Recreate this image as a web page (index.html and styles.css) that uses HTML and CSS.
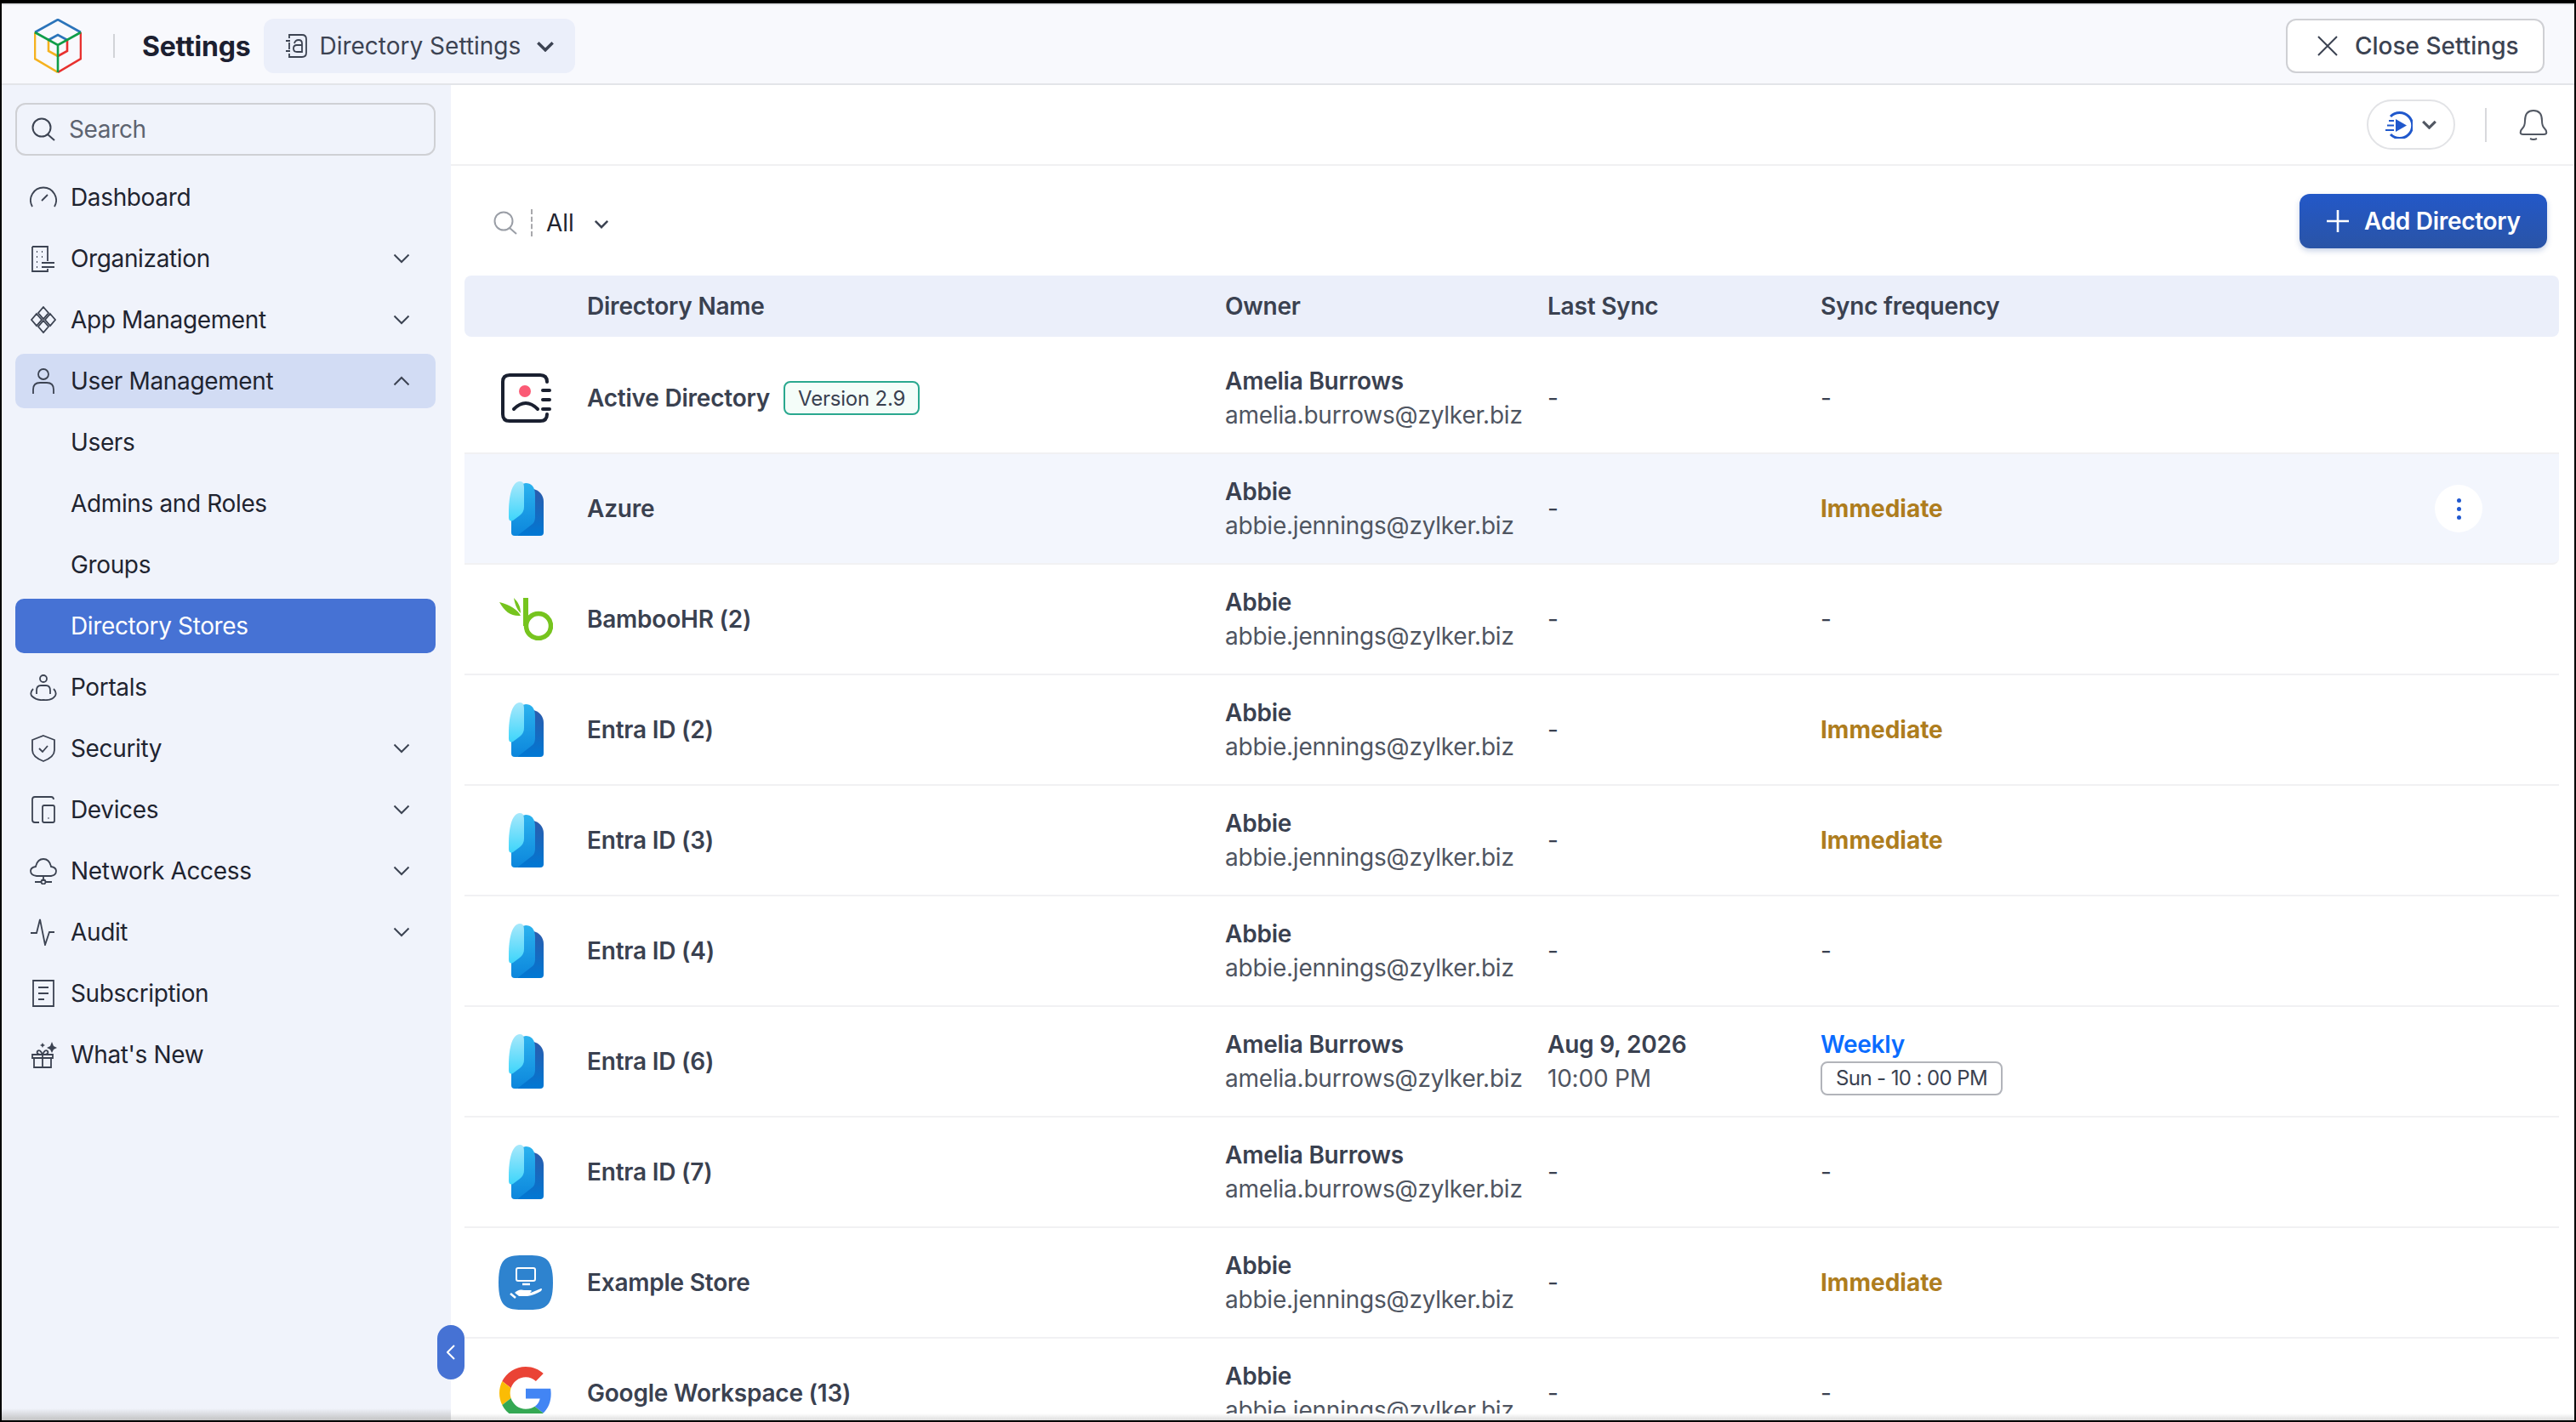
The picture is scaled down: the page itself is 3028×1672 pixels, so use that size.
FILE: index.html
```html
<!DOCTYPE html>
<html lang="en">
<head>
<meta charset="UTF-8">
<meta name="viewport" content="width=device-width, initial-scale=1.0">
<title>Directory Stores - Settings</title>
<link rel="stylesheet" href="styles.css">
</head>
<body>

<svg class="defs" width="0" height="0">
  <defs>
    <linearGradient id="azBack" x1="0" y1="0" x2="0" y2="1">
      <stop offset="0" stop-color="#2d5bab"/>
      <stop offset="1" stop-color="#0078d4"/>
    </linearGradient>
    <linearGradient id="azMid" x1="0" y1="0" x2="0" y2="1">
      <stop offset="0" stop-color="#2bb2ee"/>
      <stop offset="1" stop-color="#0c86dc"/>
    </linearGradient>
    <linearGradient id="azFront" x1="0" y1="0" x2="0" y2="1">
      <stop offset="0" stop-color="#a8e8fb"/>
      <stop offset="1" stop-color="#3dd5fb"/>
    </linearGradient>
    <symbol id="azure" viewBox="0 0 41 64">
      <path fill="url(#azBack)" d="M26 8C36 10 41 16 41 24V60Q41 64 37 64H10Z"/>
      <path fill="url(#azMid)" d="M3 42V60Q3 64 7 64H10L28 50Q31 47 31 42V16C31 6 26 2 20 2L12 4Z"/>
      <path fill="url(#azFront)" d="M0 36C0 20 3 0 13 0C18 0 18 5 18 10V30Q18 36 13 40L5 46Q0 48 0 42Z"/>
    </symbol>
    <symbol id="chev" viewBox="0 0 20 12">
      <path d="M1.5 1.5L10 10L18.500 1.500" fill="none" stroke="currentColor" stroke-width="2"/>
    </symbol>
  </defs>
</svg>

<div class="frame">
  <header class="header">
    <svg class="logo" viewBox="0 0 56 64" fill="none" stroke-width="2.6">
      <path stroke="#f5b21f" d="M1 16V47L28 63M17 25V38L28 44"/>
      <path stroke="#e8312f" d="M55 16V47L28 63M39 25V38L28 44"/>
      <path stroke="#2b74ba" d="M1 16L28 1L55 16M17 25L28 19L39 25"/>
      <path stroke="#0f9d48" d="M1 16L28 31L55 16M28 31V63"/>
    </svg>
    <span class="header-sep"></span>
    <span class="header-title">Settings</span>
    <div class="crumb">
      <svg class="crumb-icon" viewBox="0 0 26 28" fill="none" stroke="#3c4352" stroke-width="1.800">
        <path d="M5 5V1H20Q25 1 25 6V22Q25 27 20 27H5V23M5 10V18M1 8H6M1 20H6"/>
        <path d="M11 11Q12 7 16 7Q20 7 20 11V21H14Q10 21 10 17T14 13H20"/>
      </svg>
      <span>Directory Settings</span>
      <svg class="chev-bold" viewBox="0 0 20 12"><path d="M2 2L10 10L18 2" fill="none" stroke="#3c4352" stroke-width="3.200"/></svg>
    </div>
    <button class="close-btn">
      <svg class="close-icon" viewBox="0 0 24 24"><path d="M1 1L23 23M23 1L1 23" stroke="#3c4352" stroke-width="2"/></svg>
      Close Settings
    </button>
  </header>

  <div class="body-row">
    <aside class="sidebar">
      <div class="search">
        <svg class="search-icon" viewBox="0 0 28 28" fill="none" stroke="#3c4352" stroke-width="2">
          <circle cx="12" cy="12" r="10.500"/><path d="M19 20L27 27"/>
        </svg>
        <span>Search</span>
      </div>
      <nav class="nav">
        <a class="nav-item">
          <svg class="nav-icon" viewBox="0 0 32 32"><path d="M3 27A15 15 0 1 1 29 27M14 20L21 13"/></svg>
          Dashboard
        </a>
        <a class="nav-item">
          <svg class="nav-icon" viewBox="0 0 32 32"><path d="M3 2H21V19M21 28V31H3V2M8 8H9M14 8H15M8 14H9M14 14H15M8 20H9M8 26H9M14 21H29M14 26H29"/></svg>
          Organization
          <svg class="chev"><use href="#chev"/></svg>
        </a>
        <a class="nav-item">
          <svg class="nav-icon" viewBox="0 0 32 32"><path d="M16 1L22 8L16 15L10 8ZM8 9L14 16L8 23L2 16ZM24 9L30 16L24 23L18 16ZM16 17L22 24L16 31L10 24Z"/></svg>
          App Management
          <svg class="chev"><use href="#chev"/></svg>
        </a>
        <a class="nav-item open">
          <svg class="nav-icon" viewBox="0 0 32 32"><circle cx="16" cy="8" r="6"/><path d="M4 31V26Q4 18 12 18H20Q28 18 28 26V31"/></svg>
          User Management
          <svg class="chev up"><use href="#chev"/></svg>
        </a>
        <a class="nav-item sub">Users</a>
        <a class="nav-item sub">Admins and Roles</a>
        <a class="nav-item sub">Groups</a>
        <a class="nav-item sub active">Directory Stores</a>
        <a class="nav-item">
          <svg class="nav-icon" viewBox="0 0 32 32"><circle cx="16" cy="6" r="4"/><path d="M8 24V20Q8 14 13 14H19Q24 14 24 20V24M4 18Q0 22 2 26Q8 32 16 31Q26 32 30 26Q32 22 28 18"/></svg>
          Portals
        </a>
        <a class="nav-item">
          <svg class="nav-icon" viewBox="0 0 32 32"><path d="M16 1L29 6V18Q29 26 16 31Q3 26 3 18V6ZM11 16L15 20L21 13"/></svg>
          Security
          <svg class="chev"><use href="#chev"/></svg>
        </a>
        <a class="nav-item">
          <svg class="nav-icon" viewBox="0 0 32 32"><path d="M11 31H6Q3 31 3 28V4Q3 1 6 1H25Q28 1 28 4M17 11H27Q29 11 29 13V29Q29 31 27 31H17Q15 31 15 29V13Q15 11 17 11ZM21.500 26H22.500"/></svg>
          Devices
          <svg class="chev"><use href="#chev"/></svg>
        </a>
        <a class="nav-item">
          <svg class="nav-icon" viewBox="0 0 32 32"><path d="M8 22H25Q31 21 31 16Q31 12 25 11Q23 2 16 2Q9 2 7 11Q1 12 1 16Q1 21 8 22ZM16 22V28M6 29H13M19 29H26"/><circle cx="16" cy="29" r="2.500"/></svg>
          Network Access
          <svg class="chev"><use href="#chev"/></svg>
        </a>
        <a class="nav-item">
          <svg class="nav-icon" viewBox="0 0 32 32"><path d="M1 17H8L12 1L18 31L23 16H29"/></svg>
          Audit
          <svg class="chev"><use href="#chev"/></svg>
        </a>
        <a class="nav-item">
          <svg class="nav-icon" viewBox="0 0 32 32"><path d="M4 1H28V31H4ZM10 9H22M10 16H22M10 23H17"/></svg>
          Subscription
        </a>
        <a class="nav-item">
          <svg class="nav-icon" viewBox="0 0 32 32"><path d="M3 16H27V20H3ZM5 20H25V31H5ZM15 16V31M15 16Q7 16 9 12Q12 9 15 16Q18 9 21 12Q23 16 15 16Z"/><path class="fill" d="M26 1L28 6L32 8L28 10L26 14L24 10L20 8L24 6ZM15 2L16 4L18 5L16 6L15 8L14 6L12 5L14 4Z"/></svg>
          What's New
        </a>
      </nav>
      <span class="collapse">
        <svg class="collapse-icon" viewBox="0 0 10 18"><path d="M9 1L1 9L9 17" fill="none" stroke="#fff" stroke-width="2"/></svg>
      </span>
    </aside>

    <main class="main">
      <div class="topbar">
        <div class="guide-pill">
          <svg class="guide-icon" viewBox="0 0 32 32" fill="none" stroke="#2058cc" stroke-width="3">
            <path d="M6 6A15 15 0 1 1 6 27"/>
            <path d="M12 9L25 16.500L12 24Z" fill="#2058cc" stroke="none"/>
            <path d="M4 11H10M2 16.500H10M0 22H10" stroke-width="2"/>
          </svg>
          <svg class="chev-bold small" viewBox="0 0 20 12"><path d="M2 2L10 10L18 2" fill="none" stroke="#525863" stroke-width="3.400"/></svg>
        </div>
        <span class="topbar-sep"></span>
        <svg class="bell" viewBox="0 0 34 38" fill="none" stroke="#525863" stroke-width="2">
          <path d="M2 29Q1 26 4 23Q7 20 7 14Q7 2 17 2T27 14Q27 20 30 23Q33 26 32 29Q31 30 29 30H5Q3 30 2 29ZM13 35Q17 37 21 35"/>
        </svg>
      </div>

      <div class="filter-row">
        <div class="filter">
          <svg class="filter-search" viewBox="0 0 28 28" fill="none" stroke="#9a9ea6" stroke-width="2">
            <circle cx="12" cy="12" r="10.500"/><path d="M19 20L27 27"/>
          </svg>
          <span class="filter-sep"></span>
          <span class="filter-label">All</span>
          <svg class="chev-bold filter-chev" viewBox="0 0 20 12"><path d="M2 2L10 10L18 2" fill="none" stroke="#3c4352" stroke-width="2.800"/></svg>
        </div>
        <button class="add-btn">
          <svg class="add-icon" viewBox="0 0 26 26"><path d="M13 0V26M0 13H26" stroke="#fff" stroke-width="2.600"/></svg>
          Add Directory
        </button>
      </div>

      <div class="table">
        <div class="table-head">
          <span></span>
          <span>Directory Name</span>
          <span>Owner</span>
          <span>Last Sync</span>
          <span>Sync frequency</span>
        </div>

        <div class="table-row">
          <div class="cell-icon">
            <svg class="ic-ad" viewBox="0 0 60 58" fill="none" stroke="#1a2030" stroke-width="4" stroke-linecap="round">
              <path d="M55 10Q55 2 47 2H11Q3 2 3 10V48Q3 56 11 56H47Q55 56 55 48"/>
              <path d="M50 20H58M50 31H58M50 42H58M16 42Q30 28 44 42"/>
              <circle cx="29" cy="21" r="7" fill="#fb5a75" stroke="none"/>
            </svg>
          </div>
          <div class="cell-name">Active Directory <span class="tag">Version 2.9</span></div>
          <div class="owner"><b>Amelia Burrows</b><span>amelia.burrows@zylker.biz</span></div>
          <div class="cell">-</div>
          <div class="cell">-</div>
        </div>

        <div class="table-row hover">
          <div class="cell-icon"><svg class="ic-azure"><use href="#azure"/></svg></div>
          <div class="cell-name">Azure</div>
          <div class="owner"><b>Abbie</b><span>abbie.jennings@zylker.biz</span></div>
          <div class="cell">-</div>
          <div class="cell freq-now">Immediate</div>
          <div class="kebab"><i></i><i></i><i></i></div>
        </div>

        <div class="table-row">
          <div class="cell-icon">
            <svg class="ic-bamboo" viewBox="0 0 63 50">
              <path d="M31 0V33" stroke="#76c41e" stroke-width="6" fill="none"/>
              <circle cx="46" cy="33" r="14.500" stroke="#76c41e" stroke-width="5.500" fill="none"/>
              <path fill="#76c41e" d="M0 5C12 8 22 14 25 21C14 22 6 16 0 5ZM17 0C22 5 25 10 25 18C20 13 18 6 17 0Z"/>
            </svg>
          </div>
          <div class="cell-name">BambooHR (2)</div>
          <div class="owner"><b>Abbie</b><span>abbie.jennings@zylker.biz</span></div>
          <div class="cell">-</div>
          <div class="cell">-</div>
        </div>

        <div class="table-row">
          <div class="cell-icon"><svg class="ic-azure"><use href="#azure"/></svg></div>
          <div class="cell-name">Entra ID (2)</div>
          <div class="owner"><b>Abbie</b><span>abbie.jennings@zylker.biz</span></div>
          <div class="cell">-</div>
          <div class="cell freq-now">Immediate</div>
        </div>

        <div class="table-row">
          <div class="cell-icon"><svg class="ic-azure"><use href="#azure"/></svg></div>
          <div class="cell-name">Entra ID (3)</div>
          <div class="owner"><b>Abbie</b><span>abbie.jennings@zylker.biz</span></div>
          <div class="cell">-</div>
          <div class="cell freq-now">Immediate</div>
        </div>

        <div class="table-row">
          <div class="cell-icon"><svg class="ic-azure"><use href="#azure"/></svg></div>
          <div class="cell-name">Entra ID (4)</div>
          <div class="owner"><b>Abbie</b><span>abbie.jennings@zylker.biz</span></div>
          <div class="cell">-</div>
          <div class="cell">-</div>
        </div>

        <div class="table-row">
          <div class="cell-icon"><svg class="ic-azure"><use href="#azure"/></svg></div>
          <div class="cell-name">Entra ID (6)</div>
          <div class="owner"><b>Amelia Burrows</b><span>amelia.burrows@zylker.biz</span></div>
          <div class="owner sync"><b>Aug 9, 2026</b><span>10:00 PM</span></div>
          <div class="freq-weekly">
            <b>Weekly</b>
            <span class="slot">Sun - 10 : 00 PM</span>
          </div>
        </div>

        <div class="table-row">
          <div class="cell-icon"><svg class="ic-azure"><use href="#azure"/></svg></div>
          <div class="cell-name">Entra ID (7)</div>
          <div class="owner"><b>Amelia Burrows</b><span>amelia.burrows@zylker.biz</span></div>
          <div class="cell">-</div>
          <div class="cell">-</div>
        </div>

        <div class="table-row">
          <div class="cell-icon">
            <svg class="ic-store" viewBox="0 0 64 64">
              <path fill="#2e83cf" d="M32 0C52 0 64 0 64 32S52 64 32 64S0 64 0 32S12 0 32 0Z"/>
              <rect x="21" y="15" width="22" height="15" rx="2" fill="none" stroke="#fff" stroke-width="2"/>
              <path d="M28 34H37" stroke="#fff" stroke-width="2.500"/>
              <path fill="#fff" d="M19 44Q24 39 30 41H38Q40 42 37 44H31H38L50 39Q52 39 50 42Q42 47 34 48H24Z"/>
              <path d="M14 45L20 50" stroke="#fff" stroke-width="2.500"/>
            </svg>
          </div>
          <div class="cell-name">Example Store</div>
          <div class="owner"><b>Abbie</b><span>abbie.jennings@zylker.biz</span></div>
          <div class="cell">-</div>
          <div class="cell freq-now">Immediate</div>
        </div>

        <div class="table-row">
          <div class="cell-icon">
            <svg class="ic-google" viewBox="0 0 48 48">
              <path fill="#EA4335" d="M24 9.500c3.540 0 6.710 1.220 9.210 3.600l6.850-6.850C35.900 2.380 30.470 0 24 0 14.620 0 6.510 5.380 2.560 13.220l7.980 6.190C12.430 13.720 17.740 9.500 24 9.500z"/>
              <path fill="#4285F4" d="M46.980 24.550c0-1.570-.15-3.090-.38-4.550H24v9.020h12.940c-.58 2.960-2.260 5.480-4.780 7.180l7.730 6c4.510-4.180 7.090-10.360 7.090-17.650z"/>
              <path fill="#FBBC05" d="M10.530 28.590c-.48-1.450-.76-2.990-.76-4.590s.27-3.140.76-4.590l-7.980-6.190C.92 16.460 0 20.120 0 24c0 3.880.92 7.540 2.560 10.780l7.970-6.190z"/>
              <path fill="#34A853" d="M24 48c6.480 0 11.930-2.130 15.890-5.810l-7.730-6c-2.150 1.450-4.920 2.300-8.160 2.300-6.260 0-11.570-4.220-13.470-9.910l-7.980 6.190C6.510 42.620 14.620 48 24 48z"/>
            </svg>
          </div>
          <div class="cell-name">Google Workspace (13)</div>
          <div class="owner"><b>Abbie</b><span>abbie.jennings@zylker.biz</span></div>
          <div class="cell">-</div>
          <div class="cell">-</div>
        </div>
      </div>
    </main>
  </div>
</div>

</body>
</html>
```

FILE: styles.css
```css
* {
  box-sizing: border-box;
}

html, body {
  margin: 0;
  height: 100%;
}

body {
  font-family: Inter, "Noto Sans", sans-serif;
  font-size: 28px;
  color: #1f2430;
  background: #000;
  overflow: hidden;
}

.defs {
  position: absolute;
}

.frame {
  height: 1666px;
  margin: 4px 2px 0 2px;
  background: #fff;
  display: flex;
  flex-direction: column;
}

/* Top bar */
.header {
  height: 96px;
  flex: none;
  display: flex;
  align-items: center;
  background: #f8f9fd;
  border-top: 2px solid #e2e4e8;
  border-bottom: 2px solid #e3e5e9;
  padding: 4px 35px 0 38px;
}

.logo {
  width: 56px;
  height: 64px;
}

.header-sep {
  width: 2px;
  height: 28px;
  background: #d2d4d8;
  margin: 0 32px 0 37px;
}

.header-title {
  font-size: 32px;
  font-weight: 700;
  letter-spacing: -0.2px;
  color: #1c2030;
  margin-right: 16px;
}

.crumb {
  height: 64px;
  width: 366px;
  display: flex;
  align-items: center;
  background: #ebeffa;
  border-radius: 12px;
  padding-left: 25px;
  font-size: 28px;
  color: #3c4352;
}

.crumb-icon {
  width: 26px;
  height: 28px;
  margin-right: 14px;
}

.chev-bold {
  width: 22px;
  height: 13px;
  margin-left: 18px;
}

.close-btn {
  margin-left: auto;
  width: 304px;
  height: 64px;
  display: flex;
  align-items: center;
  padding: 0 0 0 35px;
  background: #fff;
  border: 2px solid #cfd0d4;
  border-radius: 12px;
  font-family: inherit;
  font-size: 28px;
  font-weight: 500;
  color: #3c4352;
}

.close-icon {
  width: 24px;
  height: 24px;
  margin-right: 20px;
}

/* Sidebar */
.body-row {
  flex: 1;
  min-height: 0;
  display: flex;
}

.sidebar {
  position: relative;
  width: 528px;
  flex: none;
  background: #f0f3fb;
  padding: 21px 18px 0 16px;
  letter-spacing: -0.36px;
}

.sidebar::after {
  content: "";
  position: absolute;
  left: 0;
  right: 0;
  bottom: 0;
  height: 14px;
  background: linear-gradient(rgba(200, 200, 200, 0), rgba(190, 190, 190, 0.9));
}

.search {
  height: 62px;
  display: flex;
  align-items: center;
  padding-left: 17px;
  border: 2px solid #cfd0d4;
  border-radius: 12px;
  color: #5d6370;
}

.search-icon {
  width: 28px;
  height: 28px;
  margin-right: 16px;
}

.nav {
  margin-top: 17px;
  display: flex;
  flex-direction: column;
  gap: 8px;
}

.nav-item {
  height: 64px;
  display: flex;
  align-items: center;
  gap: 16px;
  padding: 0 30px 0 17px;
  border-radius: 10px;
  color: #1f2430;
}

.nav-item.sub {
  padding-left: 65px;
}

.nav-item.open {
  background: #d2dcf4;
}

.nav-item.active {
  background: #4672d4;
  color: #fff;
}

.nav-icon {
  width: 32px;
  height: 32px;
  flex: none;
  fill: none;
  stroke: #3c4352;
  stroke-width: 1.800;
}

.nav-icon .fill {
  fill: #3c4352;
  stroke: none;
}

.chev {
  width: 20px;
  height: 12px;
  margin-left: auto;
  color: #3c4352;
}

.chev.up {
  transform: rotate(180deg);
}

.collapse {
  position: absolute;
  right: -16px;
  bottom: 48px;
  width: 32px;
  height: 64px;
  display: flex;
  align-items: center;
  justify-content: center;
  background: #4672d4;
  border-radius: 16px;
  z-index: 2;
}

.collapse-icon {
  width: 10px;
  height: 18px;
}

/* Main area */
.main {
  position: relative;
  flex: 1;
  min-width: 0;
  overflow: hidden;
}

.main::after {
  content: "";
  position: absolute;
  left: 0;
  right: 0;
  bottom: 0;
  height: 8px;
  background: linear-gradient(#fff, #dcdcdc);
}

.topbar {
  height: 95px;
  display: flex;
  align-items: center;
  justify-content: flex-end;
  padding-right: 31px;
  border-bottom: 2px solid #f0f0f2;
}

.guide-pill {
  width: 104px;
  height: 59px;
  display: flex;
  align-items: center;
  justify-content: center;
  border: 2px solid #e2e3e6;
  border-radius: 30px;
}

.guide-icon {
  width: 32px;
  height: 32px;
}

.chev-bold.small {
  width: 19px;
  height: 11px;
  margin-left: 10px;
}

.topbar-sep {
  width: 2px;
  height: 40px;
  background: #d8d9dc;
  margin: 0 38px 0 35px;
}

.bell {
  width: 34px;
  height: 38px;
}

.filter-row {
  height: 129px;
  display: flex;
  align-items: center;
  justify-content: space-between;
  padding: 0 32px 0 50px;
}

.filter {
  display: flex;
  align-items: center;
  margin-top: 4px;
}

.filter-search {
  width: 28px;
  height: 28px;
}

.filter-sep {
  height: 32px;
  border-left: 2px dashed #a8a8ac;
  margin: 0 16px;
}

.filter-label {
  color: #1f2430;
}

.filter-chev {
  width: 18px;
  height: 11px;
  margin: 4px 0 0 23px;
}

.add-btn {
  width: 291px;
  height: 64px;
  display: flex;
  align-items: center;
  padding-left: 32px;
  border: none;
  border-radius: 12px;
  background: linear-gradient(#2358c8, #2a54a6);
  box-shadow: 0 3px 6px rgba(40, 80, 160, 0.25);
  font-family: inherit;
  font-size: 28px;
  font-weight: 600;
  letter-spacing: -0.3px;
  color: #fff;
}

.add-icon {
  width: 26px;
  height: 26px;
  margin-right: 18px;
}

/* Table */
.table {
  margin: 0 18px 0 16px;
  letter-spacing: -0.22px;
}

.table-head,
.table-row {
  display: grid;
  grid-template-columns: 144px 750px 379px 321px 1fr 146px;
  align-items: center;
}

.table-head {
  height: 72px;
  margin-bottom: 8px;
  background: #ebeffa;
  border-radius: 8px;
  font-weight: 600;
  color: #3a4150;
}

.table-row {
  height: 130px;
  border-bottom: 2px solid #f1f1f3;
  color: #3a4150;
}

.table-row.hover {
  background: #f3f6fd;
  border-bottom-right-radius: 8px;
}

.cell-icon {
  display: flex;
  justify-content: center;
}

.cell-name {
  display: flex;
  align-items: center;
  gap: 16px;
  font-weight: 600;
}

.tag {
  height: 40px;
  padding: 0 15px;
  display: flex;
  align-items: center;
  background: #f4fdf9;
  border: 2px solid #2aa88f;
  border-radius: 8px;
  font-size: 24px;
  font-weight: 400;
}

.owner {
  display: flex;
  flex-direction: column;
  gap: 6px;
  line-height: 34px;
}

.owner b {
  font-weight: 600;
}

.owner span {
  color: #4f5561;
}

.freq-now {
  font-weight: 700;
  letter-spacing: 0;
  color: #ae7d1e;
}

.freq-weekly {
  display: flex;
  flex-direction: column;
  align-items: flex-start;
  gap: 3px;
  margin-top: 3px;
  line-height: 34px;
}

.freq-weekly b {
  font-weight: 600;
  color: #0a6cff;
}

.slot {
  height: 40px;
  padding: 0 16px;
  display: flex;
  align-items: center;
  border: 2px solid #b2b4ba;
  border-radius: 8px;
  font-size: 24px;
  letter-spacing: -0.6px;
}

.kebab {
  width: 56px;
  height: 56px;
  display: flex;
  flex-direction: column;
  align-items: center;
  justify-content: center;
  gap: 5px;
  background: #fff;
  border-radius: 50%;
}

.kebab i {
  width: 5px;
  height: 5px;
  background: #2058d0;
  border-radius: 50%;
}

.ic-ad {
  width: 60px;
  height: 58px;
}

.ic-azure {
  width: 41px;
  height: 64px;
}

.ic-bamboo {
  width: 63px;
  height: 50px;
}

.ic-store {
  width: 64px;
  height: 64px;
}

.ic-google {
  width: 62px;
  height: 62px;
}
```
